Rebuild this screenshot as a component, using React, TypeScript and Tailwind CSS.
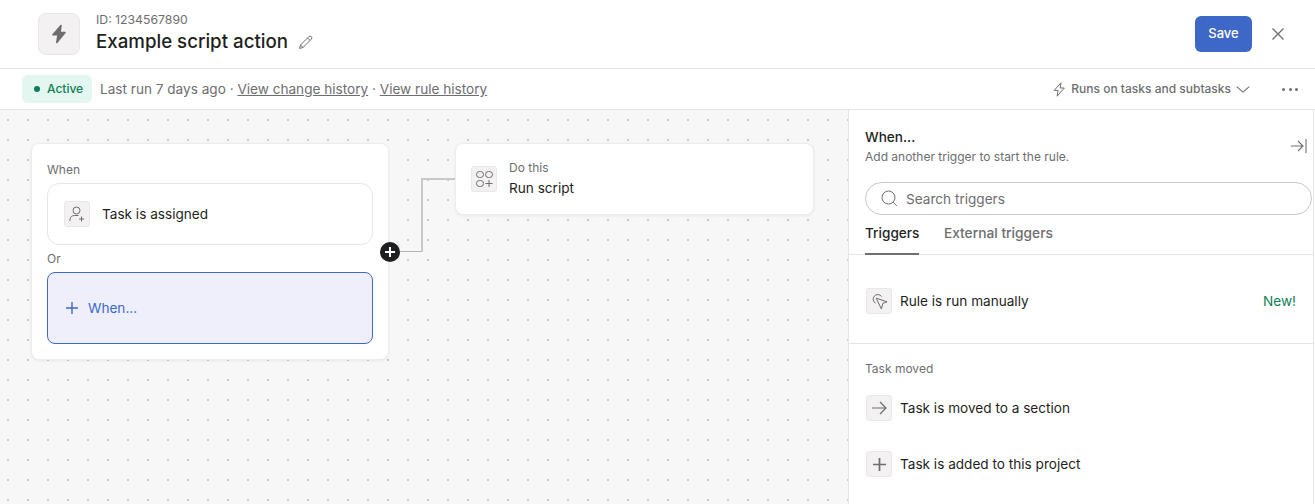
import React from "react";

const IconBox = ({ children, big }: { children: React.ReactNode; big?: boolean }) => (
    <div className={big
        ? "w-[42px] h-[42px] shrink-0 flex items-center justify-center rounded-lg bg-[#f3f1f1] border border-[#e9e7e7]"
        : "w-[26px] h-[26px] shrink-0 flex items-center justify-center rounded-[3px] bg-[#f3f1f1] border border-[#e9e7e7]"}>
        {children}
    </div>
);

const Bolt = () => (
    <svg width="16" height="20" viewBox="0 0 16 20">
        <path d="M10 1.5 2 10.8h5L5.8 18.5 14 8.6H9L10 1.5z" fill="#6d6e6f" stroke="#6d6e6f" strokeWidth="1.6" strokeLinejoin="round" />
    </svg>
);

const Pencil = () => (
    <svg width="16" height="16" viewBox="0 0 16 16" fill="none" stroke="#6d6e6f" strokeWidth="1">
        <path d="M1.6 14.4l.9-3.4 8.3-8.3a1.7 1.7 0 0 1 2.5 2.5L5 13.5l-3.4.9z" />
        <path d="M9.6 3.9l2.5 2.5M2.5 11l2.5 2.5" />
    </svg>
);

const BoltOutline = () => (
    <svg width="13" height="15" viewBox="0 0 13 15" fill="none" stroke="#6d6e6f" strokeWidth="1" strokeLinejoin="round">
        <path d="M8 .8 1.2 8.4h3.9l-1 5.8 7.2-8.2H7.2L8 .8z" />
    </svg>
);

const PersonPlus = () => (
    <svg width="16" height="16" viewBox="0 0 16 16" fill="none" stroke="#6d6e6f" strokeWidth="1">
        <circle cx="7.5" cy="4.5" r="3.5" />
        <path d="M1 15v-1.5C1 11 3 9.5 5.5 9.5h4" />
        <path d="M12.5 10.5v5M10 13h5" />
    </svg>
);

const Shapes = () => (
    <svg width="17" height="16" viewBox="0 0 17 16" fill="none" stroke="#6d6e6f" strokeWidth="1">
        <rect x="0.5" y="0.5" width="7" height="6" rx="3" />
        <rect x="9.5" y="0.5" width="7" height="6" rx="3" />
        <rect x="0.5" y="9.5" width="7" height="6" rx="3" />
        <path d="M13 9v7M9.5 12.5h7" />
    </svg>
);

const CursorClick = () => (
    <svg width="17" height="17" viewBox="0 0 17 17" fill="none" stroke="#6d6e6f" strokeWidth="1" strokeLinejoin="round">
        <path d="M4.6 10.2A4.6 4.6 0 1 1 10.6 3.6" />
        <path d="M5.2 5.2 16 8.8l-4.2 1.6L10.4 16 5.2 5.2z" fill="#f3f1f1" />
    </svg>
);

const ArrowRight = () => (
    <svg width="16" height="14" viewBox="0 0 16 14" fill="none" stroke="#6d6e6f" strokeWidth="1.2">
        <path d="M1 7h14M9 1l6 6-6 6" />
    </svg>
);

const PlusIcon = ({ size, color, width }: { size: number; color: string; width: number }) => (
    <svg width={size} height={size} viewBox="0 0 12 12" fill="none" stroke={color} strokeWidth={width}>
        <path d="M6 0v12M0 6h12" />
    </svg>
);

const TriggerRow = ({ icon, label, extra, className }: { icon: React.ReactNode; label: string; extra?: string; className: string }) => (
    <div className={`flex items-center pl-[17px] pr-[17px] ${className}`}>
        <IconBox>{icon}</IconBox>
        <span className="ml-2 text-[13.6px] text-[#1e1f21]">{label}</span>
        {extra && <span className="ml-auto text-[13.6px] text-[#0d7f56]">{extra}</span>}
    </div>
);

export default function App() {
    return (
        <div className="w-[1315px] h-[504px] overflow-hidden bg-white font-['Inter',sans-serif] flex flex-col">
            <div className="h-[69px] shrink-0 border-b border-[#e6e4e4] flex items-center pl-[38px] pr-[30px]">
                <IconBox big><Bolt /></IconBox>
                <div className="ml-[16px] mb-[2px]">
                    <div className="text-[12.25px] leading-[15px] text-[#6d6e6f]">ID: 1234567890</div>
                    <div className="flex items-center mt-[2px]">
                        <span className="text-[18.7px] leading-[26px] font-medium text-[#1e1f21]">Example script action</span>
                        <span className="ml-[10px] mt-[1px]"><Pencil /></span>
                    </div>
                </div>
                <button className="ml-auto w-[57px] h-9 rounded-md bg-[#3d68c8] text-white text-[13px] font-medium">Save</button>
                <svg className="ml-[20px]" width="12" height="12" viewBox="0 0 12 12" fill="none" stroke="#6d6e6f" strokeWidth="1.3">
                    <path d="M.5.5l11 11M11.5.5l-11 11" />
                </svg>
                <span className="w-[1px]" />
            </div>

            <div className="h-[41px] shrink-0 border-b border-[#e6e4e4] flex items-center pl-[22px] pr-[17px]">
                <div className="h-7 w-[70px] rounded-md bg-[#e3f6ef] flex items-center pl-[12px]">
                    <span className="w-[6px] h-[6px] rounded-full bg-[#0d7f56]" />
                    <span className="ml-[7px] text-xs font-medium text-[#0d7f56]">Active</span>
                </div>
                <div className="ml-2 text-[13.6px] text-[#6d6e6f]">
                    Last run 7 days ago · <span className="underline">View change history</span> · <span className="underline">View rule history</span>
                </div>
                <div className="ml-auto flex items-center text-xs font-medium text-[#6d6e6f]">
                    <BoltOutline />
                    <span className="ml-[5px]">Runs on tasks and subtasks</span>
                    <svg className="ml-[5px]" width="14" height="7" viewBox="0 0 14 7" fill="none" stroke="#6d6e6f" strokeWidth="1.1">
                        <path d="M.7.7l6.3 5.4L13.3.7" />
                    </svg>
                </div>
                <div className="ml-[32px] flex gap-[3.5px]">
                    <span className="w-[3px] h-[3px] rounded-full bg-[#6d6e6f]" />
                    <span className="w-[3px] h-[3px] rounded-full bg-[#6d6e6f]" />
                    <span className="w-[3px] h-[3px] rounded-full bg-[#6d6e6f]" />
                </div>
            </div>

            <div className="flex-1 flex min-h-0">
                {/* canvas */}
                <div className="relative w-[848px] shrink-0 bg-[#f7f7f7] bg-[radial-gradient(circle,#c9c9c9_1px,transparent_1.2px)] bg-[size:20px_20px] bg-[position:-2px_0px] flex items-start gap-[66px] pl-[31px] pt-[33px]">
                    <div className="w-[358px] h-[217px] shrink-0 bg-white rounded-lg border border-[#eeeded] shadow-[0_1px_3px_rgba(0,0,0,0.06)] px-[15px] pt-[18px]">
                        <div className="text-xs leading-[15px] text-[#6d6e6f]">When</div>
                        <div className="mt-[6px] h-[62px] rounded-xl border border-[#e8e6e6] flex items-center pl-[16px]">
                            <IconBox><PersonPlus /></IconBox>
                            <span className="ml-3 text-[13.6px] text-[#1e1f21]">Task is assigned</span>
                        </div>
                        <div className="mt-[6px] text-xs leading-[15px] text-[#6d6e6f]">Or</div>
                        <div className="mt-[6px] h-[72px] rounded-lg border border-[#3d68c8] bg-[#eeeffa] flex items-center pl-[18px]">
                            <PlusIcon size={12} color="#3d68c8" width={1.4} />
                            <span className="ml-[10px] text-[13.6px] text-[#3d68c8]">When...</span>
                        </div>
                    </div>

                    <div className="w-[359px] h-[72px] shrink-0 bg-white rounded-lg border border-[#eeeded] shadow-[0_1px_3px_rgba(0,0,0,0.06)] flex items-center pl-[15px]">
                        <IconBox><Shapes /></IconBox>
                        <div className="ml-3">
                            <div className="text-xs leading-[15px] text-[#6d6e6f]">Do this</div>
                            <div className="mt-[3px] text-[13.6px] leading-[20px] text-[#1e1f21]">Run script</div>
                        </div>
                    </div>

                    {/* connector between the two nodes */}
                    <svg className="absolute left-[380px] top-[60px]" width="76" height="92" viewBox="0 0 76 92" fill="none">
                        <path d="M20 81.5H42" stroke="#b5b3b3" strokeWidth="1" />
                        <path d="M42 82V9H75" stroke="#c9c7c7" strokeWidth="2" />
                        <circle cx="10" cy="82" r="10" fill="#1e1f21" />
                        <path d="M10 77v10M5 82h10" stroke="white" strokeWidth="2" />
                    </svg>
                </div>

                {/* trigger panel */}
                <div className="relative w-[466px] shrink-0 border-l border-r border-[#e6e4e4] bg-white">
                    <div className="flex items-start pl-[16px] pr-[6px] pt-[19px]">
                        <div>
                            <div className="text-[13.6px] leading-[16px] font-medium text-[#1e1f21]">When...</div>
                            <div className="mt-[4px] text-xs leading-[15px] text-[#6d6e6f]">Add another trigger to start the rule.</div>
                        </div>
                        <svg className="ml-auto mt-[10px]" width="16" height="14" viewBox="0 0 16 14" fill="none" stroke="#6d6e6f" strokeWidth="1.1">
                            <path d="M0 7h12M7 2l5 5-5 5M15 0v14" />
                        </svg>
                    </div>
                    <div className="mt-[18px] ml-[16px] w-[447px] h-[33px] rounded-full border border-[#c9c7c7] flex items-center pl-[15px]">
                        <svg width="17" height="17" viewBox="0 0 17 17" fill="none" stroke="#6d6e6f" strokeWidth="1">
                            <circle cx="7.5" cy="7.5" r="6.5" />
                            <path d="M12.2 12.2l3.6 3.6" />
                        </svg>
                        <span className="ml-[8px] mt-[1px] text-[13.6px] text-[#6d6e6f]">Search triggers</span>
                    </div>
                    <div className="mt-[7px] h-[33px] border-b border-[#e6e4e4] flex pl-[16px] gap-[24.5px]">
                        <div className="h-[33px] border-b-2 border-[#6d6e6f] text-[13.6px] leading-[22px] font-medium text-[#1e1f21]">Triggers</div>
                        <div className="text-[13.75px] leading-[22px] font-medium text-[#6d6e6f]">External triggers</div>
                    </div>
                    <TriggerRow icon={<CursorClick />} label="Rule is run manually" extra="New!" className="h-[89px] border-b border-[#e6e4e4] pt-[4px]" />
                    <div className="pl-[16px] mt-[17px] text-xs leading-[15px] text-[#6d6e6f]">Task moved</div>
                    <TriggerRow icon={<ArrowRight />} label="Task is moved to a section" className="mt-[19px] h-[26px]" />
                    <TriggerRow icon={<PlusIcon size={13} color="#6d6e6f" width={1.6} />} label="Task is added to this project" className="mt-[30px] h-[26px]" />
                </div>
            </div>
        </div>
    );
}
